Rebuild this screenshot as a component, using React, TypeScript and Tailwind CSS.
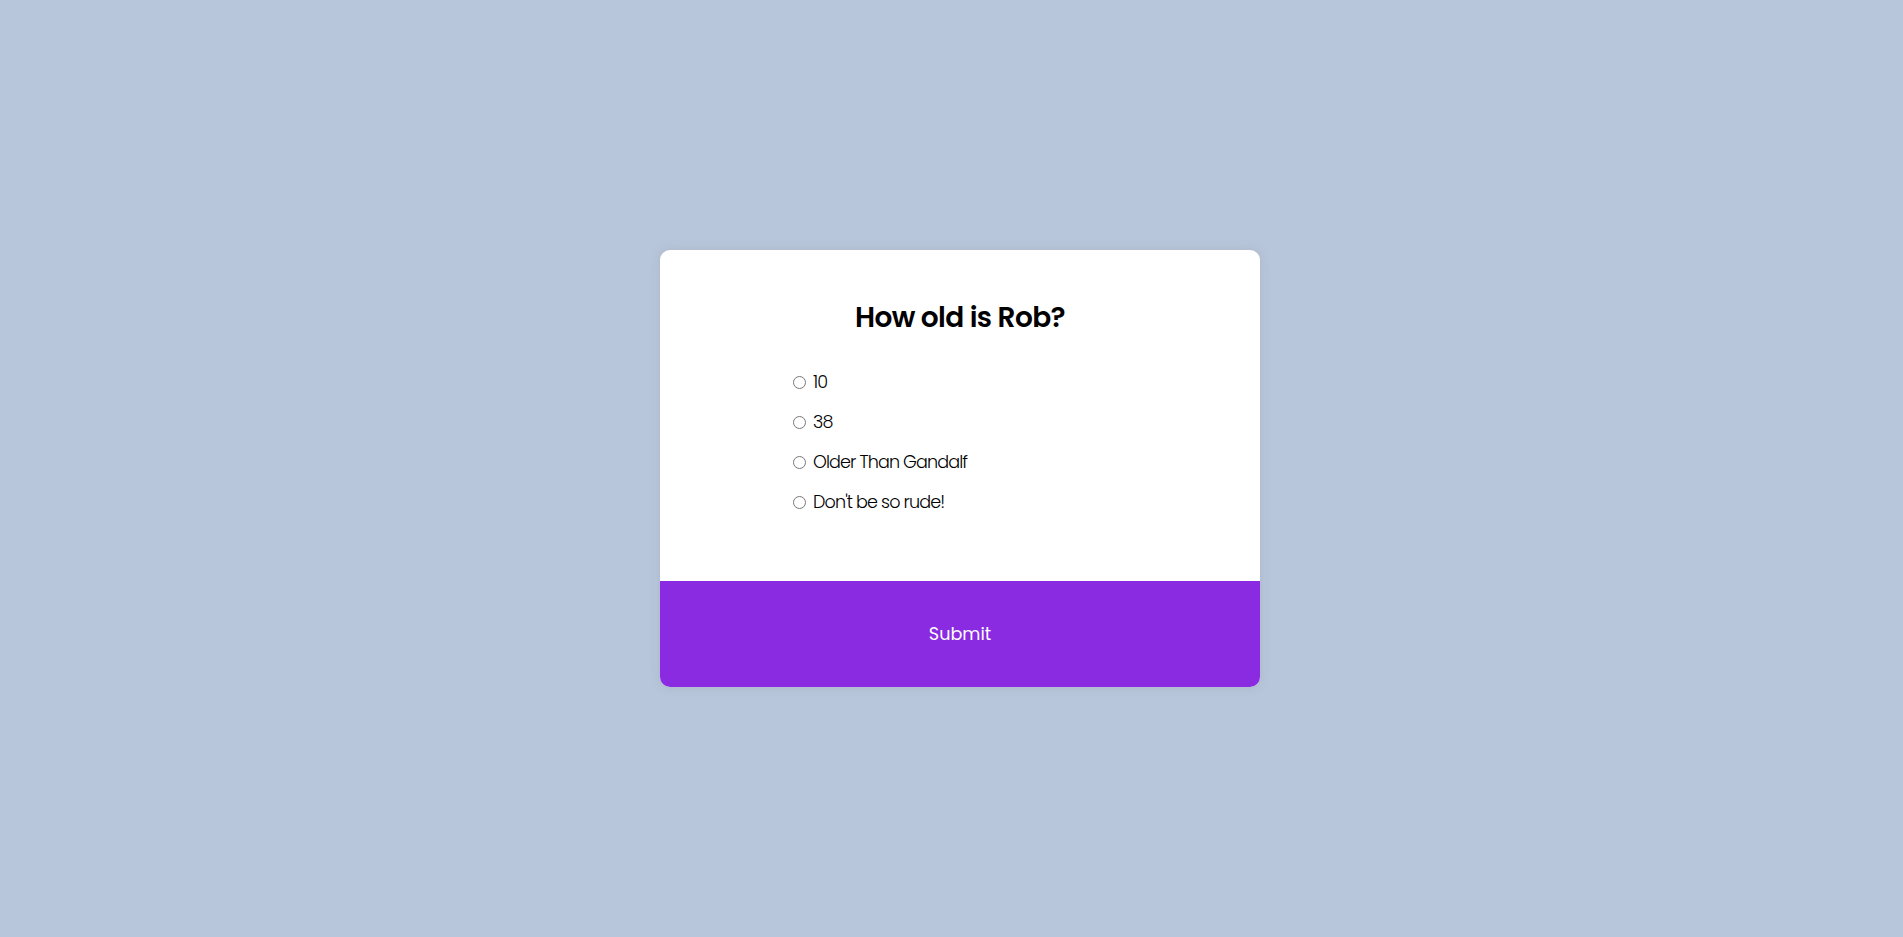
const options = [
  { id: "a", label: "10" },
  { id: "b", label: "38" },
  { id: "c", label: "Older Than Gandalf" },
  { id: "d", label: "Don't be so rude!" },
];

export default function App() {
  return (
    <div className="min-h-screen w-full bg-[#b8c6db] pl-[17px] flex items-center justify-center font-['Poppins','Inter',sans-serif]">
      <div className="w-[600px] rounded-[10px] bg-white overflow-hidden shadow-[0_0_10px_2px_rgba(100,100,100,0.1)]">
        <div className="pt-[50px] pb-[67px]">
          <h2 className="text-center text-[28px] leading-[36px] font-semibold text-black tracking-[-0.6px]">
            How old is Rob?
          </h2>
          <ul className="mt-[34px] pl-[133px] flex flex-col gap-4">
            {options.map((opt) => (
              <li key={opt.id} className="flex items-center h-6 text-[17.6px] font-light text-black">
                <input type="radio" name="answer" id={opt.id} className="w-[13px] h-[13px]" />
                <label htmlFor={opt.id} className="ml-[7px] tracking-[-0.9px]">
                  {opt.label}
                </label>
              </li>
            ))}
          </ul>
        </div>
        <button className="w-full h-[106px] bg-[#8a2be2] text-white text-[17.6px]">
          Submit
        </button>
      </div>
    </div>
  );
}
